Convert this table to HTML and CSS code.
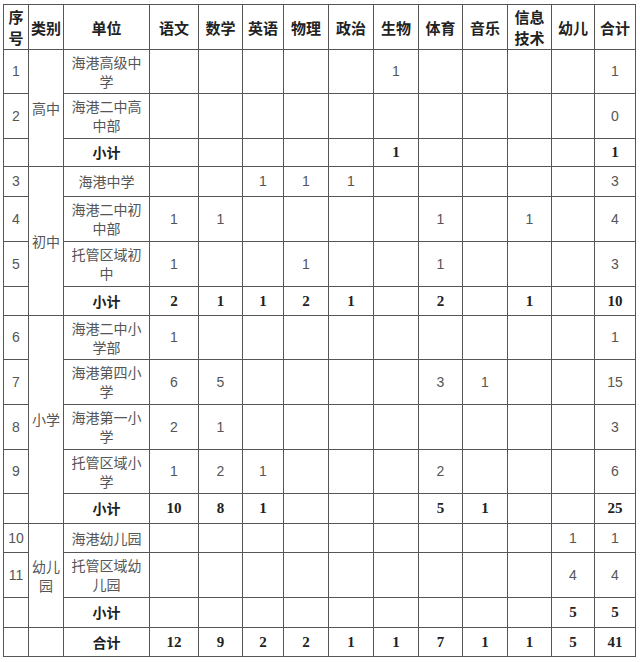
FILE: index.html
```html
<!DOCTYPE html>
<html lang="zh">
<head>
<meta charset="utf-8">
<link rel="stylesheet" href="styles.css">
</head>
<body>
<table class="grid">
<colgroup>
<col class="c-no"><col class="c-cat"><col class="c-unit">
<col class="c49"><col class="c44"><col class="c41"><col class="c45"><col class="c45"><col class="c45"><col class="c44"><col class="c45"><col class="c44"><col class="c43"><col class="c41">
</colgroup>
<tr class="h45 head">
<th>序号</th><th>类别</th><th>单位</th><th>语文</th><th>数学</th><th>英语</th><th>物理</th><th>政治</th><th>生物</th><th>体育</th><th>音乐</th><th>信息技术</th><th>幼儿</th><th>合计</th>
</tr>
<tr class="h44">
<td class="no">1</td><td class="cat" rowspan="3">高中</td><td class="unit">海港高级中学</td><td></td><td></td><td></td><td></td><td></td><td>1</td><td></td><td></td><td></td><td></td><td>1</td>
</tr>
<tr class="h45">
<td class="no">2</td><td class="unit">海港二中高中部</td><td></td><td></td><td></td><td></td><td></td><td></td><td></td><td></td><td></td><td></td><td>0</td>
</tr>
<tr class="h28 sub">
<td class="no"></td><td class="unit">小计</td><td></td><td></td><td></td><td></td><td></td><td>1</td><td></td><td></td><td></td><td></td><td>1</td>
</tr>
<tr class="h30">
<td class="no">3</td><td class="cat" rowspan="4">初中</td><td class="unit">海港中学</td><td></td><td></td><td>1</td><td>1</td><td>1</td><td></td><td></td><td></td><td></td><td></td><td>3</td>
</tr>
<tr class="h45">
<td class="no">4</td><td class="unit">海港二中初中部</td><td>1</td><td>1</td><td></td><td></td><td></td><td></td><td>1</td><td></td><td>1</td><td></td><td>4</td>
</tr>
<tr class="h45">
<td class="no">5</td><td class="unit">托管区域初中</td><td>1</td><td></td><td></td><td>1</td><td></td><td></td><td>1</td><td></td><td></td><td></td><td>3</td>
</tr>
<tr class="h29 sub">
<td class="no"></td><td class="unit">小计</td><td>2</td><td>1</td><td>1</td><td>2</td><td>1</td><td></td><td>2</td><td></td><td>1</td><td></td><td>10</td>
</tr>
<tr class="h44">
<td class="no">6</td><td class="cat" rowspan="5">小学</td><td class="unit">海港二中小学部</td><td>1</td><td></td><td></td><td></td><td></td><td></td><td></td><td></td><td></td><td></td><td>1</td>
</tr>
<tr class="h45">
<td class="no">7</td><td class="unit">海港第四小学</td><td>6</td><td>5</td><td></td><td></td><td></td><td></td><td>3</td><td>1</td><td></td><td></td><td>15</td>
</tr>
<tr class="h45">
<td class="no">8</td><td class="unit">海港第一小学</td><td>2</td><td>1</td><td></td><td></td><td></td><td></td><td></td><td></td><td></td><td></td><td>3</td>
</tr>
<tr class="h44">
<td class="no">9</td><td class="unit">托管区域小学</td><td>1</td><td>2</td><td>1</td><td></td><td></td><td></td><td>2</td><td></td><td></td><td></td><td>6</td>
</tr>
<tr class="h30 sub">
<td class="no"></td><td class="unit">小计</td><td>10</td><td>8</td><td>1</td><td></td><td></td><td></td><td>5</td><td>1</td><td></td><td></td><td>25</td>
</tr>
<tr class="h29">
<td class="no">10</td><td class="cat" rowspan="3">幼儿园</td><td class="unit">海港幼儿园</td><td></td><td></td><td></td><td></td><td></td><td></td><td></td><td></td><td></td><td>1</td><td>1</td>
</tr>
<tr class="h45">
<td class="no">11</td><td class="unit">托管区域幼儿园</td><td></td><td></td><td></td><td></td><td></td><td></td><td></td><td></td><td></td><td>4</td><td>4</td>
</tr>
<tr class="h30 sub">
<td class="no"></td><td class="unit">小计</td><td></td><td></td><td></td><td></td><td></td><td></td><td></td><td></td><td></td><td>5</td><td>5</td>
</tr>
<tr class="h29 sub">
<td class="no"></td><td class="cat"></td><td class="unit">合计</td><td>12</td><td>9</td><td>2</td><td>2</td><td>1</td><td>1</td><td>7</td><td>1</td><td>1</td><td>5</td><td>41</td>
</tr>
</table>
</body>
</html>
```

FILE: styles.css
```css
html, body {
  margin: 0;
  padding: 0;
  background: #fff;
}
body {
  padding: 4px 0 0 3px;
  font-family: "Liberation Sans", "Noto Sans CJK SC", sans-serif;
}
.grid {
  border-collapse: collapse;
  table-layout: fixed;
  width: 633px;
  border: 1px solid #4a4a4a;
}
.grid th,
.grid td {
  border: 1px solid #555;
  padding: 0 4px;
  text-align: center;
  vertical-align: middle;
  font-size: 14px;
  line-height: 19px;
  color: #555;
  word-break: break-all;
}
.c-no { width: 25px; }
.c-cat { width: 35px; }
.c-unit { width: 86px; }
.c49 { width: 49px; }
.c44 { width: 44px; }
.c41 { width: 41px; }
.c45 { width: 45px; }
.c43 { width: 43px; }

.h45 { height: 45px; }
.h44 { height: 44px; }
.h30 { height: 30px; }
.h29 { height: 29px; }
.h28 { height: 28px; }

.grid .head th {
  font-family: "Noto Sans CJK SC", sans-serif;
  font-weight: 700;
  font-size: 15px;
  line-height: 21px;
  color: #222;
  padding: 0 1px;
}
.grid td.no {
  padding: 0;
  font-size: 14px;
}
.grid td.cat {
  padding: 0 2px;
  font-family: "Noto Sans CJK SC", sans-serif;
}
.grid td.unit {
  padding: 0 5px;
  font-family: "Noto Sans CJK SC", sans-serif;
}
.grid .sub td {
  font-family: "Liberation Serif", serif;
  font-weight: 700;
  font-size: 15px;
  color: #222;
}
.grid .sub td.unit {
  font-family: "Noto Sans CJK SC", sans-serif;
  font-weight: 700;
  font-size: 14px;
}
```
